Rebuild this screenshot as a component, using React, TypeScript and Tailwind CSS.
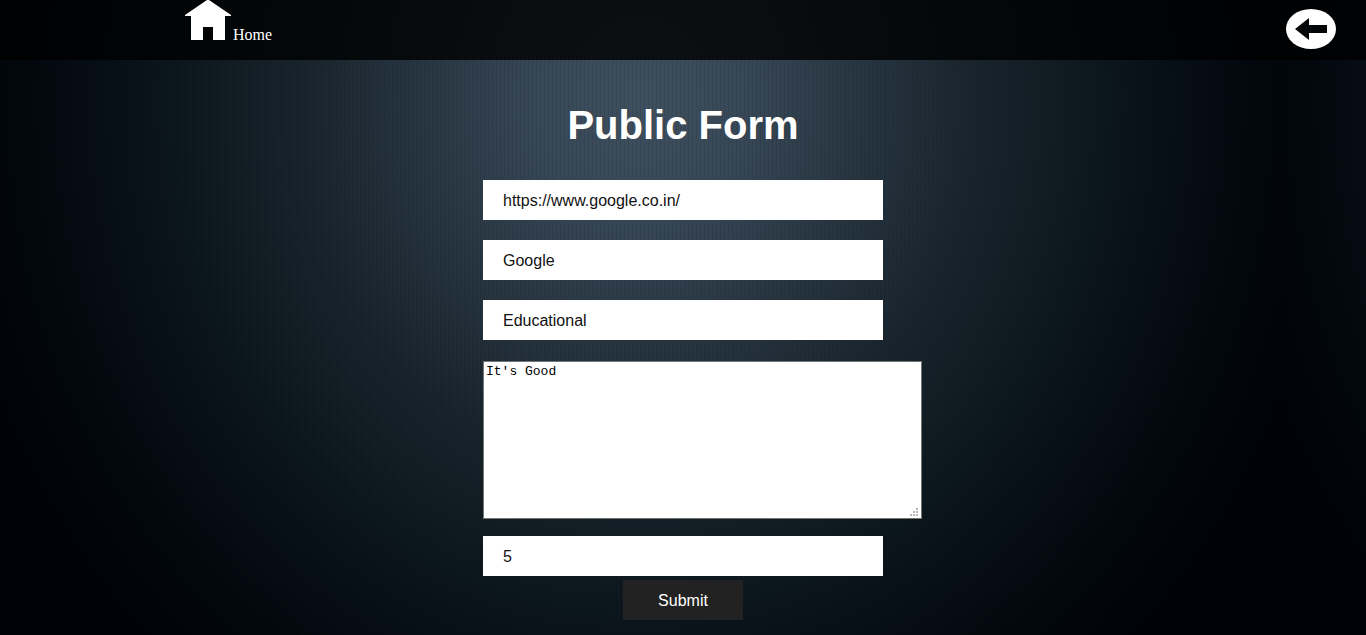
import React from "react";

const fieldClass =
  "block h-10 w-full border-0 bg-white px-5 pt-[2px] text-base text-[#111] outline-none";

function HomeIcon() {
  return (
    <svg width="46" height="40" viewBox="0 0 46 40" aria-hidden="true">
      <path
        d="M22 0h2l22 15v1h-6v24H28V27H18v13H6V16H0v-1z"
        fill="#fff"
      />
    </svg>
  );
}

function BackIcon() {
  return (
    <svg width="50" height="40" viewBox="0 0 50 40" aria-hidden="true">
      <ellipse cx="25" cy="20" rx="25" ry="20" fill="#fff" />
      <path d="M9 20 23 9v7h18v8H23v7z" fill="#040506" />
    </svg>
  );
}

export default function App() {
  return (
    <div className="min-h-screen bg-black bg-[repeating-linear-gradient(90deg,rgba(0,0,0,0.07)_0px,rgba(0,0,0,0.07)_1px,transparent_1px,transparent_4px),radial-gradient(ellipse_640px_700px_at_50%_100px,#3e4f5e_0%,#374756_17%,#273541_35%,#18242c_53%,#0b151c_74%,#03090f_93%,#000207_110%)] bg-[length:1280px_100%] bg-repeat-x font-['Liberation_Sans',Arial,sans-serif]">
      <header className="flex h-[60px] items-start justify-between bg-black/80 pr-[30px] pl-[185px]">
        <a
          href="#home"
          className="flex items-end gap-[2px] font-['Liberation_Serif',serif] text-base leading-[18px] text-white"
        >
          <HomeIcon />
          <span className="-mb-1">Home</span>
        </a>
        <a href="#back" aria-label="Back" className="mt-[9px] block">
          <BackIcon />
        </a>
      </header>
      <main className="mx-auto w-[400px]">
        <h1 className="pt-10 text-center text-[40px] leading-[50px] font-bold text-white">
          Public Form
        </h1>
        <form className="mt-[30px]" onSubmit={(e) => e.preventDefault()}>
          <div className="space-y-5">
            <input
              type="text"
              aria-label="Website URL"
              defaultValue="https://www.google.co.in/"
              className={fieldClass}
            />
            <input
              type="text"
              aria-label="Website name"
              defaultValue="Google"
              className={fieldClass}
            />
            <input
              type="text"
              aria-label="Category"
              defaultValue="Educational"
              className={fieldClass}
            />
          </div>
          <div className="relative mt-[21px] w-[439px]">
            <textarea
              aria-label="Comment"
              defaultValue="It's Good"
              className="block h-[158px] w-full resize-none border border-[#767676] bg-white p-[2px] font-['Liberation_Mono',monospace] text-[13px] leading-[15px] text-black outline-none"
            />
            <svg
              width="8"
              height="8"
              viewBox="0 0 8 8"
              fill="#b8b8b8"
              aria-hidden="true"
              className="pointer-events-none absolute right-1 bottom-[3px]"
            >
              <path d="M6 0h2v2H6zM3 3h2v2H3zM6 3h2v2H6zM0 6h2v2H0zM3 6h2v2H3zM6 6h2v2H6z" />
            </svg>
          </div>
          <input
            type="text"
            aria-label="Rating"
            defaultValue="5"
            className={"mt-[17px] " + fieldClass}
          />
          <button
            type="submit"
            className="mx-auto mt-1 block h-10 w-[120px] bg-[#222] pt-[2px] text-base text-white"
          >
            Submit
          </button>
        </form>
      </main>
    </div>
  );
}
